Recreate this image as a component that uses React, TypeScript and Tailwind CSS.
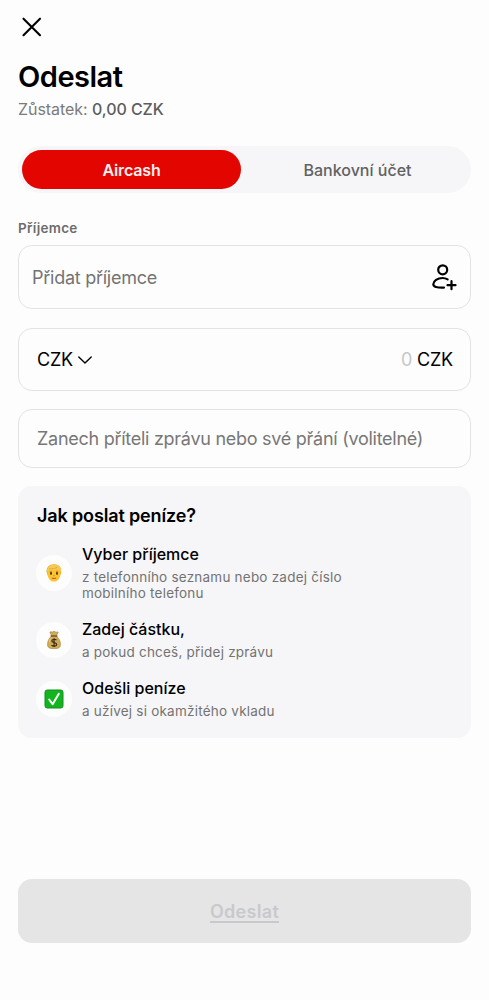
import type { ReactNode } from "react";

interface StepProps {
  icon: ReactNode;
  title: string;
  text: ReactNode;
  className?: string;
}

const CloseIcon = () => (
  <svg width="20" height="20" viewBox="0 0 20 20" fill="none" stroke="#000" strokeWidth="2.1" strokeLinecap="round">
    <path d="M1.5 1.7 18 18.2M18 1.7 1.5 18.2" />
  </svg>
);

const ChevronIcon = () => (
  <svg width="16" height="10" viewBox="0 0 16 10" fill="none" stroke="#000" strokeWidth="1.4" strokeLinecap="round" strokeLinejoin="round">
    <path d="M1.8 2 8 8 14.2 2" />
  </svg>
);

const AddPersonIcon = () => (
  <svg width="26" height="28" viewBox="0 0 26 28" fill="none" stroke="#000" strokeWidth="2.2" strokeLinecap="round">
    <circle cx="11.7" cy="6.8" r="4.5" />
    <path d="M16.6 16.4C15.2 15.5 13.4 15 11.5 15 6.5 15 2.3 17.900 2.3 21.300 2.3 24 6 24.800 13 24.600" />
    <path d="M20.500 18.200V26.200M16.500 22.200H24.500" />
  </svg>
);

const FaceEmoji = () => (
  <svg width="16" height="18" viewBox="0 0 16 18">
    <path d="M.6 8C.2 3 3.500 0 8.200.2 13 .3 15.800 3.500 15.200 8.500L13.800 12.500H2.100Z" fill="#e5a72c" />
    <path d="M1.500 8.200C1.600 4.700 3.500 3.200 8 3.200s6.400 1.800 6.400 5.300C14.400 14.200 12 17.600 8 17.600S1.400 14 1.500 8.200Z" fill="#fbc232" />
    <path d="M.8 7.500C1.200 3 4.500.4 8.500.5c4.500.1 7.100 3 6.500 7.500C13.800 7.200 12.800 6 11.700 4.700 8.500 6.300 4.500 6.200 2.500 6.500Z" fill="#f6ca57" />
    <path d="M3 4.900C6 5 9 4.500 11.500 3.100" fill="none" stroke="#d99823" strokeWidth=".6" />
    <ellipse cx="5" cy="9.400" rx="1" ry="1.300" fill="#4b2d0d" />
    <ellipse cx="11" cy="9.400" rx="1" ry="1.300" fill="#4b2d0d" />
    <path d="M3.800 7.400h2.200M10 7.400h2.200M7.300 11.700h1.400" stroke="#b97b16" strokeWidth=".7" />
    <path d="M6.200 14.300c1.100.3 2.500.3 3.600 0" stroke="#c2571d" strokeWidth="1" fill="none" strokeLinecap="round" />
  </svg>
);

const MoneyBagEmoji = () => (
  <svg width="14" height="18" viewBox="0 0 14 18">
    <path d="M4.800 5 2.800 1.200C4 .2 5 1.500 6 .8 7 .1 8 .3 8.500 1c1 .6 1.800-.6 2.700.2L9.200 5c2.500 1.500 4.300 5 4.300 8.500 0 3-2 4.200-6.500 4.200S.5 16.500.5 13.500C.5 10 2.300 6.500 4.800 5Z" fill="#d0ac58" stroke="#94702b" strokeWidth=".5" />
    <path d="M4.200 5.100h5.600" stroke="#80551f" strokeWidth="1.500" strokeLinecap="round" />
    <path d="M2.300 11C2.600 9 3.600 7.600 4.500 7" stroke="#ecd38c" strokeWidth="1" fill="none" />
    <path d="M9.500 9.100C8.300 7.800 4.800 8 4.800 9.900c0 2.200 4.900 1.300 4.900 3.500 0 2-3.800 2.200-5.200.7M7.100 7.200v8.800" stroke="#3d2c12" strokeWidth="1.200" fill="none" />
  </svg>
);

const CheckEmoji = () => (
  <svg width="20" height="20" viewBox="0 0 20 20">
    <rect x="1" y="1" width="18" height="18" rx="2.300" fill="#12b51d" stroke="#158c20" strokeWidth="1" />
    <path d="M5.200 10.500 8.600 15.200 14.800 4.800" stroke="#fff" strokeWidth="2" fill="none" strokeLinecap="round" strokeLinejoin="round" />
  </svg>
);

const Step = ({ icon, title, text, className = "" }: StepProps) => (
  <li className={`flex items-center gap-[10px] ${className}`}>
    <div className="mt-[2px] flex size-9 shrink-0 items-center justify-center rounded-full bg-[#fdfdfd]">{icon}</div>
    <div>
      <h3 className="text-[16px] leading-[22px] font-medium text-black">{title}</h3>
      <p className="mt-[4px] text-[13.5px] leading-4 tracking-[0.22px] text-[#737373]">{text}</p>
    </div>
  </li>
);

export default function App() {
  return (
    <main className="flex h-[1000px] w-full flex-col bg-[#fdfdfd] px-[18px] pt-[17px] font-['Inter',sans-serif]">
      <button className="ml-[4px] size-5" aria-label="Zavřít">
        <CloseIcon />
      </button>

      <h1 className="mt-[22px] text-[29px] leading-9 font-semibold tracking-[-0.5px] text-black">Odeslat</h1>
      <p className="mt-[4px] text-[16px] leading-5 tracking-[-0.06px] text-[#7b7b7b]">
        Zůstatek: <span className="font-medium text-[#5d5d5d]">0,00 CZK</span>
      </p>

      <div className="mt-[27px] flex h-[47px] shrink-0 rounded-full bg-[#f6f6f8] p-[4px]">
        <button className="w-[219px] rounded-full bg-[#e30500] text-[16px] font-semibold tracking-[-0.15px] text-[#fff0ef]">Aircash</button>
        <button className="flex-1 pl-[7px] text-[16px] font-medium text-[#626264]">Bankovní účet</button>
      </div>

      <label className="mt-[25px] text-[13.5px] leading-5 font-semibold tracking-[0.3px] text-[#6c6c6c]">Příjemce</label>
      <div className="mt-[7px] flex h-16 shrink-0 items-center justify-between rounded-[14px] border border-[#e3e3e3] pr-[13px] pl-[13px] text-[18px] tracking-[-0.26px] text-[#747474]">
        <span>Přidat příjemce</span>
        <AddPersonIcon />
      </div>

      <div className="mt-[19px] flex h-[63px] shrink-0 items-center justify-between rounded-[14px] border border-[#e3e3e3] pr-[17px] pl-[18px] text-[18px] tracking-[-0.2px] text-black">
        <button className="flex items-center gap-[4px]">
          CZK
          <ChevronIcon />
        </button>
        <span>
          <span className="text-[#c7c7c7]">0</span> CZK
        </span>
      </div>

      <div className="mt-[18px] flex h-[59px] shrink-0 items-center rounded-[14px] border border-[#e3e3e3] px-[18px] text-[18px] tracking-[-0.27px] text-[#777]">
        <span className="whitespace-nowrap">Zanech příteli zprávu nebo své přání (volitelné)</span>
      </div>

      <section className="mt-[18px] h-[252px] shrink-0 rounded-[14px] bg-[#f6f6f8] px-[18px] pt-[18px]">
        <h2 className="pl-px text-[18px] leading-6 font-semibold tracking-[-0.14px] text-black">Jak poslat peníze?</h2>
        <ul className="mt-[15px]">
          <Step
            icon={<FaceEmoji />}
            title="Vyber příjemce"
            text={
              <>
                z telefonního seznamu nebo zadej číslo
                <br />
                mobilního telefonu
              </>
            }
          />
          <Step className="mt-[17px]" icon={<MoneyBagEmoji />} title="Zadej částku," text="a pokud chceš, přidej zprávu" />
          <Step className="mt-[17px]" icon={<CheckEmoji />} title="Odešli peníze" text="a užívej si okamžitého vkladu" />
        </ul>
      </section>

      <button className="mt-[141px] h-16 shrink-0 rounded-[14px] bg-[#e5e5e5] text-[18px] font-semibold tracking-[0.3px] text-[#c8c9cc] underline decoration-[1.5px] underline-offset-[3px]">
        Odeslat
      </button>
    </main>
  );
}
